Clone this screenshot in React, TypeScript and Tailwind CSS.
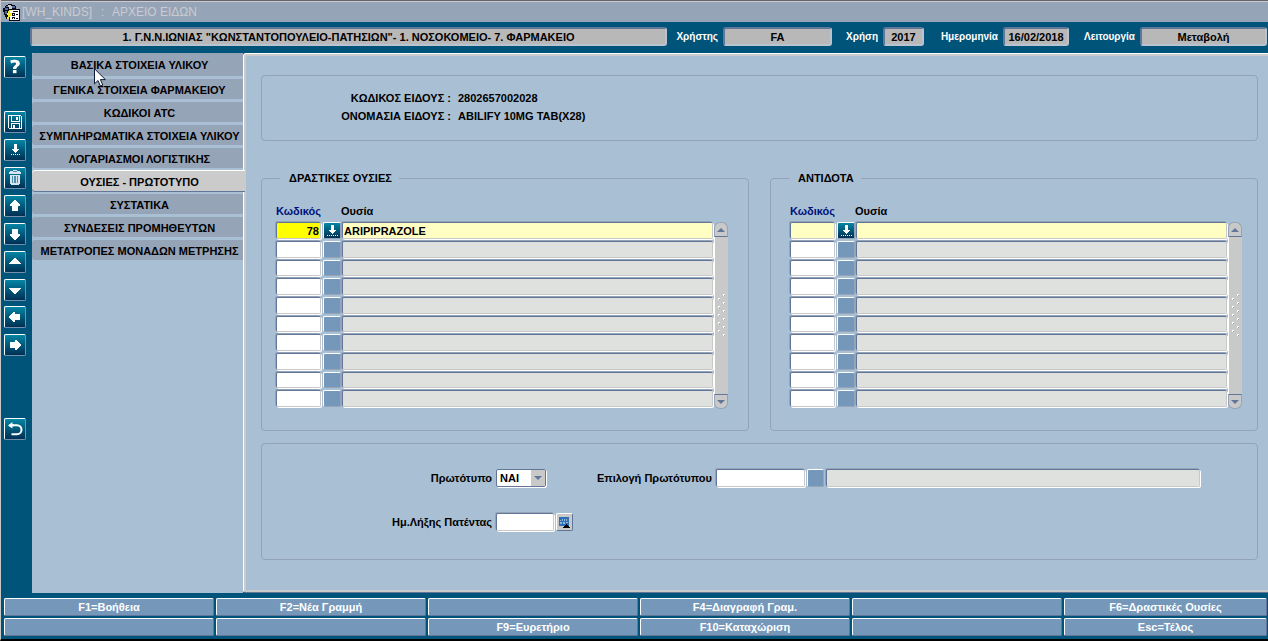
import type { ReactNode } from "react";
import clsx from "clsx";

const TABS = [
  "ΒΑΣΙΚΑ ΣΤΟΙΧΕΙΑ ΥΛΙΚΟΥ",
  "ΓΕΝΙΚΑ ΣΤΟΙΧΕΙΑ ΦΑΡΜΑΚΕΙΟΥ",
  "ΚΩΔΙΚΟΙ ATC",
  "ΣΥΜΠΛΗΡΩΜΑΤΙΚΑ ΣΤΟΙΧΕΙΑ ΥΛΙΚΟΥ",
  "ΛΟΓΑΡΙΑΣΜΟΙ ΛΟΓΙΣΤΙΚΗΣ",
  "ΟΥΣΙΕΣ - ΠΡΩΤΟΤΥΠΟ",
  "ΣΥΣΤΑΤΙΚΑ",
  "ΣΥΝΔΕΣΕΙΣ ΠΡΟΜΗΘΕΥΤΩΝ",
  "ΜΕΤΑΤΡΟΠΕΣ ΜΟΝΑΔΩΝ ΜΕΤΡΗΣΗΣ",
];
const ACTIVE_TAB = 5;

const FUNCTION_KEYS = [
  "F1=Βοήθεια",
  "F2=Νέα Γραμμή",
  "",
  "F4=Διαγραφή Γραμ.",
  "",
  "F6=Δραστικές Ουσίες",
  "",
  "",
  "F9=Ευρετήριο",
  "F10=Καταχώριση",
  "",
  "Esc=Τέλος",
];

// Sunken Oracle Forms style edge shared by every text item.
const SUNKEN =
  "rounded-[2px] border border-t-[#62769a] border-l-[#62769a] border-r-[#c8c8c8] border-b-[#c8c8c8] shadow-[-1px_-1px_0_#96a4b7,1px_1px_0_#fff] outline-none";
const STATUS =
  "h-[19px] min-w-0 rounded-[3px] border-2 border-t-[#62769a] border-l-[#62769a] border-r-[#b9c4d0] border-b-[#b9c4d0] bg-[#b8b8b8] text-center outline-none";

function AppIcon() {
  return (
    <svg width="17" height="17" viewBox="0 0 17 17" shapeRendering="crispEdges" aria-hidden="true">
      <path d="M3 1h2V0h4v1h3v1h1v3h4v12H6v-2H3v-2H2v-2H1V8H0V4h2V2h1z" fill="#0a0a18" />
      <path d="M3 2h2v1H3zM2 4h3v2H2zM9 2h3v2H9z" fill="#54689c" />
      <path d="M5 1h3v1h1v3H6V3H5z" fill="#c9ccd4" />
      <path d="M2 7h2v3H2z" fill="#54689c" />
      <path d="M7 6h9v10H7z" fill="#fff" />
      <path d="M10 7h5v1h-5zM9 9h3v3H9zM13 10h2v1h-2zM9 13h3v2H9zM13 14h2v1h-2z" fill="#0a0a18" />
      <path d="M10 10h1v1h-1zM10 14h1v1h-1z" fill="#fff" />
      <path d="M6 6h2v1H7v2h2v1H8v2H7v1H6v2H4v-2h1v-2H4V9h1V7h1z" fill="#f3ee1d" />
    </svg>
  );
}

function ToolIcon({ children }: { children: ReactNode }) {
  return (
    <svg width="20" height="20" viewBox="0 0 20 20" fill="#fff" shapeRendering="crispEdges" aria-hidden="true">
      {children}
    </svg>
  );
}

const TOOLS: { label: string; icon: ReactNode; className?: string }[] = [
  {
    label: "Βοήθεια",
    className: "mb-[27px]",
    icon: (
      <g shapeRendering="geometricPrecision">
        <path d="M5.2 3.6C7.8 2.3 14.8 2 14.8 6.5c0 2.7-3.4 3-3.4 5.4H8c0-3.4 3.1-3.6 3.1-5.2 0-1.8-2.9-1.3-5-.2z" />
        <path d="M7.9 13h3.6v3.2H7.9z" />
      </g>
    ),
  },
  {
    label: "Αποθήκευση",
    icon: (
      <>
        <path d="M3 3h13v1H4v12h12V4h1v13H4v-1H3z" />
        <path d="M6 4h1v5h7V4h1v6H6zM11 5h2v3h-2zM6 11h9v5h-1v-4H7v4H6z" />
        <path d="M8 13h2v3H8z" />
      </>
    ),
  },
  {
    label: "Λίστα τιμών",
    icon: (
      <path d="M9 4h3v5h2v1h-1v1h-1v1h-1v1h-1v-1H9v-1H8v-1H7V9h2zM6 14h1v1H6zM8 14h1v1H8zM10 14h1v1h-1zM12 14h1v1h-1zM14 14h1v1h-1z" />
    ),
  },
  {
    label: "Διαγραφή",
    icon: (
      <>
        <path d="M8 2h4v1h3v1h1v2H4V4h1V3h3z" fill="#d5e6ee" />
        <path d="M5 7h10v9h-1v1H6v-1H5z" fill="#d5e6ee" />
        <path d="M7 8h1v7H7zM9 8h2v7H9zM12 8h1v7h-1z" fill="#4f8daa" />
        <path d="M8 3h4v1H8z" fill="#4f8daa" />
      </>
    ),
  },
  { label: "Πρώτη εγγραφή", icon: <path d="M9 4h2v1h1v1h1v1h1v1h1v2h-2v5H7v-5H5V8h1V7h1V6h1V5h1z" /> },
  { label: "Τελευταία εγγραφή", icon: <path d="M7 5h6v5h2v2h-1v1h-1v1h-1v1h-1v1H9v-1H8v-1H7v-1H6v-1H5v-2h2z" /> },
  { label: "Προηγούμενη εγγραφή", icon: <path d="M9 6h2v1h1v1h1v1h1v1h1v1h1v1H4v-1h1v-1h1V9h1V8h1V7h1z" /> },
  {
    label: "Επόμενη εγγραφή",
    className: "-mb-px",
    icon: <path d="M4 8h12v1h-1v1h-1v1h-1v1h-1v1h-1v1H9v-1H8v-1H7v-1H6v-1H5V9H4z" />,
  },
  { label: "Προηγούμενη σελίδα", icon: <path d="M4 9h1V8h1V7h1V6h1V5h2v2h5v6h-5v2H8v-1H7v-1H6v-1H5v-1H4z" /> },
  { label: "Επόμενη σελίδα", icon: <path d="M16 9h-1V8h-1V7h-1V6h-1V5h-2v2H5v6h5v2h2v-1h1v-1h1v-1h1v-1h1z" /> },
  {
    label: "Επιστροφή",
    className: "mt-[56px]",
    icon: (
      <g shapeRendering="geometricPrecision">
        <path d="M4.5 6.2H12a4 4 0 0 1 0 9H6.5" fill="none" stroke="#fff" strokeWidth="2" />
        <path d="M3 6.5 7.4 3v2.6H9v1.6H7.4v2.2z" />
      </g>
    ),
  },
];

function LovButton({ label, active }: { label: string; active?: boolean }) {
  return (
    <button
      type="button"
      aria-label={label}
      className={clsx(
        "flex h-full w-full items-center justify-center rounded-[2px] border border-t-white border-l-white border-r-[#96a4b7] border-b-[#96a4b7]",
        active ? "bg-linear-to-b from-[#0786a4] to-[#003054]" : "bg-[#7598ba]",
      )}
    >
      {active && (
        <svg width="14" height="14" viewBox="0 0 14 14" fill="#fff" shapeRendering="crispEdges" aria-hidden="true">
          <path d="M6 1h3v5h2v1h-1v1H9v1H8v1H7V9H6V8H5V7H4V6h2zM2 11h1v1H2zM4 11h1v1H4zM6 11h1v1H6zM8 11h1v1H8zM10 11h1v1h-1zM12 11h1v1h-1z" />
        </svg>
      )}
    </button>
  );
}

function ScrollArrow({ label, down }: { label: string; down?: boolean }) {
  return (
    <button
      type="button"
      aria-label={label}
      className={clsx(
        "flex h-[15px] w-full shrink-0 items-center justify-center border border-[#96a4b7] bg-[#c9c9c9]",
        down ? "rounded-b-md border-t-[#62769a]" : "rounded-t-md border-b-[#62769a]",
      )}
    >
      <svg width="8" height="4" viewBox="0 0 8 4" fill="#62769a" aria-hidden="true">
        <path d={down ? "M0 0h8L4 4z" : "M0 4h8L4 0z"} />
      </svg>
    </button>
  );
}

function ScrollBar() {
  return (
    <div className="flex w-[14px] shrink-0 flex-col">
      <ScrollArrow label="Κύλιση πάνω" />
      <div className="flex flex-1 items-center justify-center border-l border-white bg-[#c9c9c9]">
        <svg width="9" height="44" viewBox="0 0 9 44" shapeRendering="crispEdges" aria-hidden="true">
          {[0, 8, 16, 24, 32, 40].map((y) => (
            <g key={y}>
              <path d={`M6 ${y}h2v1h-1v1h-1z`} fill="#fff" />
              <path d={`M7 ${y + 1}h1v1h-1z`} fill="#96a4b7" />
              {y < 40 && <path d={`M1 ${y + 4}h2v1h-1v1h-1z`} fill="#fff" />}
              {y < 40 && <path d={`M2 ${y + 5}h1v1h-1z`} fill="#96a4b7" />}
            </g>
          ))}
        </svg>
      </div>
      <ScrollArrow label="Κύλιση κάτω" down />
    </div>
  );
}

type Substance = { code: string; name: string };

function SubstanceBlock({ title, rows, selected, className }: {
  title: string;
  rows: Substance[];
  selected?: boolean;
  className: string;
}) {
  // Forms always paints ten lines, filled or not.
  const lines = Array.from({ length: 10 }, (_, i) => rows[i] ?? { code: "", name: "" });
  return (
    <fieldset className={clsx("min-w-0 flex-1 rounded-[4px] border border-[#93a3b7] pb-[21px]", className)}>
      <legend className="pl-[9px] pr-[7px] leading-4">{title}</legend>
      <div className="flex items-end pt-[15px]">
        <table className="min-w-0 flex-1 table-fixed border-collapse">
          <thead>
            <tr className="h-[21px] text-left align-middle">
              <th className="w-[48px] p-0 pb-px pl-px text-[#00117c]">Κωδικός</th>
              <th className="w-[18px] p-0" aria-label="Λίστα" />
              <th className="p-0 pb-px">Ουσία</th>
            </tr>
          </thead>
          <tbody>
            {lines.map((line, i) => {
              const height = i % 3 === 2 ? "h-[16px]" : "h-[17px]";
              return (
                <tr key={i}>
                  <td className="p-0 pb-[2px] pl-px pr-[2px]">
                    <input
                      aria-label={`${title} κωδικός ${i + 1}`}
                      defaultValue={line.code}
                      className={clsx(
                        "block w-full px-px text-right",
                        SUNKEN,
                        height,
                        i > 0 ? "bg-white" : selected ? "bg-[#ffff00]" : "bg-[#ffffc4]",
                      )}
                    />
                  </td>
                  <td className="p-0 pb-[2px]">
                    <div className={height}>
                      <LovButton label={`${title} λίστα ${i + 1}`} active={i === 0} />
                    </div>
                  </td>
                  <td className="p-0 pb-[2px] pl-px pr-px">
                    <input
                      readOnly
                      aria-label={`${title} ουσία ${i + 1}`}
                      value={line.name}
                      className={clsx("block w-full px-px", SUNKEN, height, i === 0 ? "bg-[#ffffc4]" : "bg-[#dfe1de]")}
                    />
                  </td>
                </tr>
              );
            })}
          </tbody>
        </table>
        <div className="flex h-[187px]">
          <ScrollBar />
        </div>
      </div>
    </fieldset>
  );
}

function StatusField({ id, label, value, labelClass, fieldClass }: {
  id: string;
  label: string;
  value: string;
  labelClass: string;
  fieldClass: string;
}) {
  return (
    <>
      <label htmlFor={id} className={clsx("shrink-0 pr-[5px] text-right text-[10px] text-white", labelClass)}>
        {label}
      </label>
      <input id={id} readOnly value={value} className={clsx(STATUS, fieldClass)} />
    </>
  );
}

export default function App() {
  return (
    <div className="relative flex min-h-screen flex-col border-b-2 border-l border-b-black border-l-[#c8c8c8] bg-[#005379] font-['Liberation_Sans',Arial,sans-serif] text-[11px] font-bold leading-[14px] text-black">
      <header>
        <div className="flex h-[22px] items-center gap-[2px] border-t border-[#66636a] bg-[#96a4b7] pl-[2px] pt-px text-[12px] font-normal text-[#c9ccd0] shadow-[inset_0_1px_0_#c8ccd0]">
          <AppIcon />
          <h1 className="flex">
            <span className="w-[79px]">[WH_KINDS]</span>
            <span className="w-[11px]">:</span>
            <span>ΑΡΧΕΙΟ ΕΙΔΩΝ</span>
          </h1>
        </div>
        <div className="flex h-[31px] items-center pb-[2px] pl-[29px] pr-px">
          <input
            readOnly
            aria-label="Μονάδα"
            value={'1. Γ.Ν.Ν.ΙΩΝΙΑΣ "ΚΩΝΣΤΑΝΤΟΠΟΥΛΕΙΟ-ΠΑΤΗΣΙΩΝ"- 1. ΝΟΣΟΚΟΜΕΙΟ- 7. ΦΑΡΜΑΚΕΙΟ'}
            className={clsx(STATUS, "flex-1")}
          />
          <StatusField id="user" label="Χρήστης" value="FA" labelClass="w-[56px]" fieldClass="w-[109px]" />
          <StatusField id="year" label="Χρήση" value="2017" labelClass="w-[51px]" fieldClass="w-[41px]" />
          <StatusField id="date" label="Ημερομηνία" value="16/02/2018" labelClass="w-[79px]" fieldClass="w-[66px]" />
          <StatusField id="mode" label="Λειτουργία" value="Μεταβολή" labelClass="w-[71px]" fieldClass="w-[127px]" />
        </div>
      </header>

      <div className="flex flex-1">
        <nav aria-label="Εργαλεία" className="flex w-[31px] shrink-0 flex-col gap-[6px] pl-[3px] pt-[3px]">
          {TOOLS.map((tool) => (
            <button
              key={tool.label}
              type="button"
              aria-label={tool.label}
              className={clsx(
                "flex size-[22px] items-center justify-center rounded-[2px] border border-t-white border-l-white border-r-[#7590ae] border-b-[#7590ae] bg-linear-to-b from-[#0786a4] to-[#003054]",
                tool.className,
              )}
            >
              <ToolIcon>{tool.icon}</ToolIcon>
            </button>
          ))}
        </nav>

        <div role="tablist" aria-orientation="vertical" className="flex w-[211px] shrink-0 flex-col gap-[3px] bg-[#a9bfd3]">
          {TABS.map((tab, i) => (
            <button
              key={tab}
              type="button"
              role="tab"
              aria-selected={i === ACTIVE_TAB}
              className={clsx(
                "shrink-0 whitespace-nowrap rounded-l-[3px] pl-1 text-center",
                i === 0 ? "h-[23px]" : "h-[20px] pt-[2px]",
                i === ACTIVE_TAB
                  ? "z-10 -mr-[2px] bg-[#cbcbcb] pr-[2px] shadow-[0_-1px_0_#fff,0_1px_0_#62769a]"
                  : "bg-[#96a4b7]",
              )}
            >
              {tab}
            </button>
          ))}
        </div>

        <main className="flex min-w-0 flex-1 flex-col rounded-l-[3px] border-l border-t border-b border-b-[#62769a] border-l-white border-t-white bg-[#a9bfd3] shadow-[inset_2px_2px_0_#cbcbcb,inset_0_-2px_0_#cbcbcb]">
          <div className="flex flex-1 flex-col pb-4 pl-[17px] pr-[10px] pt-[21px]">
            <section className="rounded-[4px] border border-[#93a3b7] pb-[15px] pt-[13px]">
              <dl className="grid grid-cols-[189px_1fr] gap-x-[7px] leading-[18px]">
                <dt className="text-right">ΚΩΔΙΚΟΣ ΕΙΔΟΥΣ :</dt>
                <dd>2802657002028</dd>
                <dt className="text-right">ΟΝΟΜΑΣΙΑ ΕΙΔΟΥΣ :</dt>
                <dd>ABILIFY 10MG TAB(X28)</dd>
              </dl>
            </section>

            <div className="mt-[29px] flex gap-[21px]">
              <SubstanceBlock
                title="ΔΡΑΣΤΙΚΕΣ ΟΥΣΙΕΣ"
                rows={[{ code: "78", name: "ARIPIPRAZOLE" }]}
                selected
                className="pl-[13px] pr-5 [&>legend]:ml-[5px]"
              />
              <SubstanceBlock title="ΑΝΤΙΔΟΤΑ" rows={[]} className="pl-[18px] pr-[15px]" />
            </div>

            <section className="mt-3 flex flex-col gap-[26px] rounded-[4px] border border-[#93a3b7] pb-[28px] pr-[57px] pt-[25px]">
              <div className="flex items-center">
                <label htmlFor="prototype" className="w-[230px] shrink-0 text-right">
                  Πρωτότυπο
                </label>
                <div className="relative ml-1 w-[50px] shrink-0">
                  <select
                    id="prototype"
                    className="block h-[18px] w-full appearance-none rounded-[2px] border border-[#62769a] bg-white pl-[3px] shadow-[1px_1px_0_#fff] outline-none"
                  >
                    <option>ΝΑΙ</option>
                    <option>ΟΧΙ</option>
                  </select>
                  <span className="pointer-events-none absolute inset-y-px right-px flex w-[14px] items-center justify-center bg-[#c9c9c9]">
                    <svg width="8" height="4" viewBox="0 0 8 4" fill="#62769a" aria-hidden="true">
                      <path d="M0 0h8L4 4z" />
                    </svg>
                  </span>
                </div>
                <label htmlFor="prototype-code" className="w-[166px] shrink-0 text-right">
                  Επιλογή Πρωτότυπου
                </label>
                <input id="prototype-code" className={clsx("ml-1 h-[18px] w-[89px] shrink-0 bg-white px-[2px]", SUNKEN)} />
                <div className="mx-[2px] h-[18px] w-[17px] shrink-0">
                  <LovButton label="Λίστα πρωτοτύπων" />
                </div>
                <input
                  readOnly
                  aria-label="Περιγραφή πρωτοτύπου"
                  className={clsx("h-[18px] min-w-0 flex-1 bg-[#dfe1de] px-[2px]", SUNKEN)}
                />
              </div>
              <div className="flex items-center">
                <label htmlFor="patent-end" className="w-[230px] shrink-0 text-right">
                  Ημ.Λήξης Πατέντας
                </label>
                <input id="patent-end" className={clsx("ml-1 h-[18px] w-[58px] bg-white px-[2px]", SUNKEN)} />
                <button
                  type="button"
                  aria-label="Ημερολόγιο"
                  className="ml-[2px] flex h-[18px] w-[17px] items-center justify-center rounded-[2px] border border-t-white border-l-white border-r-[#62769a] border-b-[#62769a] bg-[#c9c9c9]"
                >
                  <svg width="13" height="13" viewBox="0 0 13 13" shapeRendering="crispEdges" aria-hidden="true">
                    <path d="M1 1h10v9H1z" fill="#2f6fb5" />
                    <path d="M2 4h1v1H2zM4 3h1v2H4zM6 3h1v2H6zM8 3h1v2H8zM2 6h2v2H2zM5 6h2v2H5zM8 6h2v1H8z" fill="#8fb2d8" />
                    <path d="M8 8h1v1h1v1h1v1h1v1H5v-1h1v-1h1V9h1z" fill="#000" />
                  </svg>
                </button>
              </div>
            </section>
          </div>
        </main>
      </div>

      <footer className="grid grid-cols-[repeat(5,210fr)_203fr] gap-[2px] pb-[3px] pl-[3px] pr-px pt-[5px] text-white">
        {FUNCTION_KEYS.map((text, i) => (
          <button
            key={i}
            type="button"
            aria-label={text || "Κενό πλήκτρο"}
            className="h-[18px] min-w-0 rounded-[2px] border border-t-white border-l-white border-r-[#62769a] border-b-[#62769a] bg-[#7598ba] leading-[16px]"
          >
            {text}
          </button>
        ))}
      </footer>

      <svg
        className="pointer-events-none absolute left-[93px] top-[68px] z-20"
        width="13"
        height="20"
        viewBox="0 0 13 20"
        aria-hidden="true"
      >
        <path d="M.5.8v15l3.5-3.3 2.4 5.6 2.4-1-2.4-5.5h5z" fill="#fff" stroke="#0d1a38" />
      </svg>
    </div>
  );
}
